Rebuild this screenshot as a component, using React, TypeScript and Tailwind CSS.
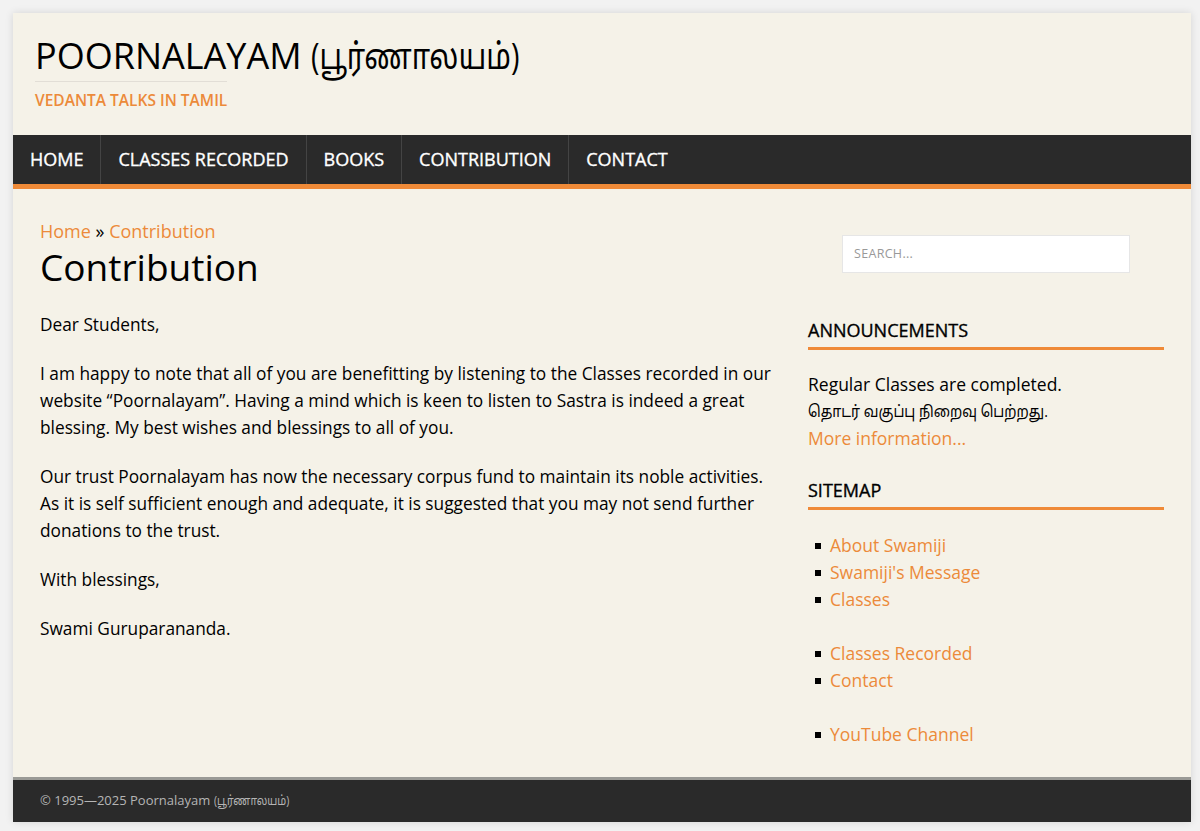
import React from "react";

const ORANGE = "text-[#ec8a3a]";

export default function App() {
  const navItems = ["HOME", "CLASSES RECORDED", "BOOKS", "CONTRIBUTION", "CONTACT"];
  const groups = [
    ["About Swamiji", "Swamiji's Message", "Classes"],
    ["Classes Recorded", "Contact"],
    ["YouTube Channel"],
  ];
  return (
    <div
      className="min-h-[831px] bg-[#f2f2f2] pt-[13px] pb-[9px]"
      style={{ fontFamily: '"Open Sans", "Noto Sans Tamil", "Noto Sans", sans-serif' }}
    >
      <div className="mx-[13px] w-[1178px] bg-[#f5f2e8] shadow-[0_0_8px_rgba(0,0,0,0.12)]">
        {/* Header */}
        <header className="h-[122px] px-[22px] pt-[20px]">
          <h1 className="whitespace-nowrap text-[36px] leading-[46px] text-black font-normal">
            POORNALAYAM{" "}
            <span className="inline-block origin-left scale-x-[0.8]">(பூர்ணாலயம்)</span>
          </h1>
          <div className="mt-[2px] w-[192px] border-t border-[#e2ded6] pt-[6px]">
            <span className={`whitespace-nowrap text-[15.5px] leading-[20px] font-semibold ${ORANGE}`}>
              VEDANTA TALKS IN TAMIL
            </span>
          </div>
        </header>

        {/* Nav */}
        <nav className="flex h-[54px] bg-[#2a2a2a] border-b-[5px] border-[#ef8a38]">
          {navItems.map((n, i) => (
            <div
              key={n}
              className={`flex items-center px-[17px] text-[18px] text-white [-webkit-text-stroke:0.35px_white] ${
                i < navItems.length - 1 ? "border-r border-[#444]" : ""
              }`}
            >
              {n}
            </div>
          ))}
        </nav>

        {/* Main */}
        <div className="flex pl-[27px] pr-[27px] pt-[30px] pb-[29px]">
          <main className="w-[745px]">
            <div className={`text-[18px] leading-[24px] ${ORANGE}`}>
              Home <span className="text-black">»</span> Contribution
            </div>
            <h2 className="mt-[0px] text-[37px] leading-[48px] text-black">Contribution</h2>
            <div className="mt-[20px] text-[17.3px] leading-[27px] text-black">
              <p className="mb-[22px]">Dear Students,</p>
              <p className="mb-[22px]">
                I am happy to note that all of you are benefitting by listening to the Classes recorded in our
                website “Poornalayam”. Having a mind which is keen to listen to Sastra is indeed a great
                blessing. My best wishes and blessings to all of you.
              </p>
              <p className="mb-[22px]">
                Our trust Poornalayam has now the necessary corpus fund to maintain its noble activities. As it is
                self sufficient enough and adequate, it is suggested that you may not send further donations to
                the trust.
              </p>
              <p className="mb-[22px]">With blessings,</p>
              <p>Swami Guruparananda.</p>
            </div>
          </main>

          <aside className="ml-[23px] w-[356px]">
            <div className="flex justify-center pt-[16px]">
              <div className="flex h-[38px] w-[288px] items-center border border-[#e6e6e6] bg-white px-[11px] text-[12.5px] tracking-wide text-[#999]">
                SEARCH...
              </div>
            </div>

            <h3 className="mt-[45px] border-b-[3px] border-[#ef8a38] pb-[5px] text-[18px] leading-[24px] text-black [-webkit-text-stroke:0.35px_black]">
              ANNOUNCEMENTS
            </h3>
            <div className="mt-[21px] text-[17.5px] leading-[27px] text-black">
              <div>Regular Classes are completed.</div>
              <div className="whitespace-nowrap text-[16px]">
                <span className="inline-block origin-left scale-x-[0.88]">தொடர் வகுப்பு நிறைவு பெற்றது.</span>
              </div>
              <div className={ORANGE}>More information...</div>
            </div>

            <h3 className="mt-[26px] border-b-[3px] border-[#ef8a38] pb-[5px] text-[18px] leading-[24px] text-black [-webkit-text-stroke:0.35px_black]">
              SITEMAP
            </h3>
            <div className="mt-[22px] text-[17.5px] leading-[27px]">
              {groups.map((g, gi) => (
                <ul key={gi} className={gi < groups.length - 1 ? "mb-[27px]" : ""}>
                  {g.map((item) => (
                    <li key={item} className="flex items-center">
                      <span className="ml-[7px] mr-[9px] inline-block h-[6px] w-[6px] bg-black" />
                      <span className={ORANGE}>{item}</span>
                    </li>
                  ))}
                </ul>
              ))}
            </div>
          </aside>
        </div>

        {/* Footer */}
        <footer className="flex h-[45px] items-center border-t-[3px] border-[#9a9a96] bg-[#2a2a2a] px-[27px]">
          <span className="whitespace-nowrap text-[13px] text-[#b5b5b5]">
            © 1995—2025 Poornalayam{" "}
            <span className="inline-block origin-left scale-x-[0.8]">(பூர்ணாலயம்)</span>
          </span>
        </footer>
      </div>
    </div>
  );
}
